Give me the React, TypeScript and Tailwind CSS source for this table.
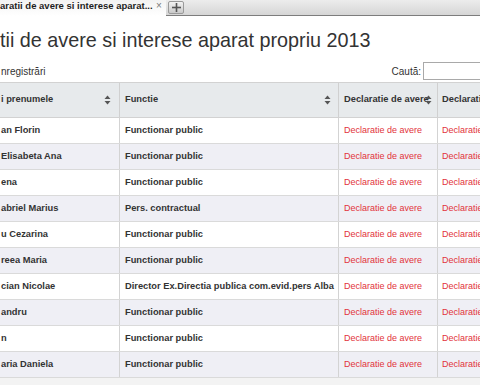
import React from "react";

const rows: [string, string][] = [
  ["an Florin", "Functionar public"],
  ["Elisabeta Ana", "Functionar public"],
  ["ena", "Functionar public"],
  ["abriel Marius", "Pers. contractual"],
  ["u Cezarina", "Functionar public"],
  ["reea Maria", "Functionar public"],
  ["cian Nicolae", "Director Ex.Directia publica com.evid.pers Alba"],
  ["andru", "Functionar public"],
  ["n", "Functionar public"],
  ["aria Daniela", "Functionar public"],
];

function SortIcon() {
  return (
    <svg width="7" height="10" viewBox="0 0 7 10" className="block">
      <path d="M3.5 0.5 L6.5 4 L0.5 4 Z" fill="#555" />
      <path d="M3.5 9.5 L6.5 6 L0.5 6 Z" fill="#555" />
    </svg>
  );
}

export default function App() {
  return (
    <div className="w-[480px] h-[385px] overflow-hidden bg-white font-['Liberation_Sans',Arial,sans-serif]">
      {/* tab strip */}
      <div className="flex h-[16px]">
        <div className="flex w-[166px] bg-gradient-to-b from-[#f3f3f3] to-white">
          <div className="h-[12px] leading-[12px] text-[9.5px] font-bold text-[#1e1e1e] whitespace-nowrap w-[153px] overflow-hidden">
            aratii de avere si interese aparat...
          </div>
          <div className="h-[12px] leading-[12px] text-[10px] text-[#7a7a7a] ml-[3px]">×</div>
        </div>
        <div className="flex-1 bg-gradient-to-b from-[#ececec] to-[#d6d6d6] border-b border-[#7d7d7d] flex items-start pl-[2px] pt-[1px]">
          <div className="w-[16px] h-[13px] rounded-[2px] border border-[#9a9a9a] bg-gradient-to-b from-[#f2f2f2] to-[#c9c9c9] flex items-center justify-center">
            <svg width="9" height="9" viewBox="0 0 9 9">
              <rect x="3.7" y="0" width="1.6" height="9" fill="#555" />
              <rect x="0" y="3.7" width="9" height="1.6" fill="#555" />
            </svg>
          </div>
        </div>
      </div>

      <div className="w-[520px]">
        {/* title */}
        <div className="mt-[12px] h-[24px] leading-[24px] text-[19.8px] text-[#333] whitespace-nowrap">
          tii de avere si interese aparat propriu 2013
        </div>

        {/* controls */}
        <div className="mt-[10px] mb-[2px] h-[18px] flex items-center justify-between text-[10px] text-[#333]">
          <div className="pl-[1px]">nregistrări</div>
          <div className="flex items-center h-[18px]">
            <span className="mr-[2px]">Caută:</span>
            <div className="w-[97px] h-[18px] border border-[#a9a9a9] bg-white" />
          </div>
        </div>

        {/* header */}
        <div className="grid grid-cols-[119px_219px_99px_83px] h-[36px] border-t border-b border-[#d2d2d2] bg-[#e7eaec] text-[9.3px] font-bold text-[#333]">
          <div className="relative flex items-center pl-[1px]">
            i prenumele
            <div className="absolute right-[8px] top-[12px]"><SortIcon /></div>
          </div>
          <div className="relative flex items-center pl-[5px] border-l border-[#d0d0d0]">
            Functie
            <div className="absolute right-[7px] top-[12px]"><SortIcon /></div>
          </div>
          <div className="relative flex items-center pl-[5px] border-l border-[#d0d0d0] whitespace-nowrap overflow-hidden">
            Declaratie de avere
            <div className="absolute right-[5px] top-[12px]"><SortIcon /></div>
          </div>
          <div className="flex items-center pl-[4px] border-l border-[#d0d0d0] whitespace-nowrap overflow-hidden">
            Declaratie de interese
          </div>
        </div>

        {/* body */}
        {rows.map(([name, fn], i) => (
          <div
            key={i}
            className={
              "grid grid-cols-[119px_219px_99px_83px] h-[26px] border-b border-[#dadada] text-[9.3px] " +
              (i % 2 === 1 ? "bg-[#efeff5]" : "bg-white")
            }
          >
            <div className="flex items-center pl-[1px] font-bold text-[#333] whitespace-nowrap overflow-hidden">{name}</div>
            <div className="flex items-center pl-[5px] font-bold text-[#333] border-l border-[#d3d3d3] whitespace-nowrap overflow-hidden">{fn}</div>
            <div className="flex items-center pl-[5px] text-[9px] text-[#e2333b] border-l border-[#d3d3d3] whitespace-nowrap overflow-hidden">Declaratie de avere</div>
            <div className="flex items-center pl-[4px] text-[9px] text-[#e2333b] border-l border-[#d3d3d3] whitespace-nowrap overflow-hidden">Declaratie de interese</div>
          </div>
        ))}
        <div className="h-[12px] bg-[#f3f3f3]" />
      </div>
    </div>
  );
}
